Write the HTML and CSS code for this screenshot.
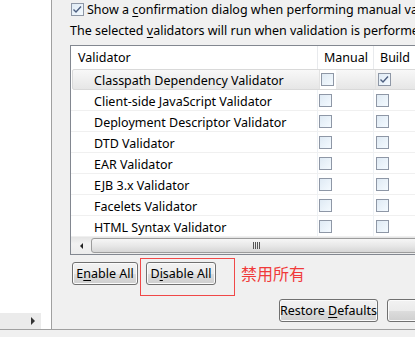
FILE: index.html
```html
<!DOCTYPE html>
<html lang="en">
<head>
    <meta charset="UTF-8">
    <title>Validation Preferences</title>
    <link rel="stylesheet" href="styles.css">
</head>
<body>
    <div class="window">
        <div class="main">
            <!-- Preference tree (mostly scrolled out of view) -->
            <aside class="nav">
                <div class="nav-scroll"><span class="arrow-right"></span></div>
            </aside>

            <section class="page">
                <label class="check-line">
                    <span class="cb">
                        <svg width="13" height="13" viewBox="0 0 13 13"><path d="M2.5 6.5 L5 9 L10 3.5" fill="none" stroke="#4d5f80" stroke-width="1.4"/></svg>
                    </span>
                    <span>Show a <u>c</u>onfirmation dialog when performing manual validation</span>
                </label>
                <p class="hint">The selected <u>v</u>alidators will run when validation is performed:</p>

                <div class="table">
                    <div class="thead">
                        <div class="th th-name">Validator</div>
                        <div class="th">Manual</div>
                        <div class="th">Build</div>
                        <div class="th"></div>
                    </div>

                    <div class="row hot">
                        <div class="td td-name">Classpath Dependency Validator</div>
                        <div class="td td-manual"><span class="cb"></span></div>
                        <div class="td td-build"><span class="cb"><svg width="13" height="13" viewBox="0 0 13 13"><path d="M2.5 6.5 L5 9 L10 3.5" fill="none" stroke="#4d5f80" stroke-width="1.4"/></svg></span></div>
                        <div class="td"></div>
                    </div>
                    <div class="row">
                        <div class="td td-name">Client-side JavaScript Validator</div>
                        <div class="td td-manual"><span class="cb"></span></div>
                        <div class="td td-build"><span class="cb"></span></div>
                        <div class="td"></div>
                    </div>
                    <div class="row">
                        <div class="td td-name">Deployment Descriptor Validator</div>
                        <div class="td td-manual"><span class="cb"></span></div>
                        <div class="td td-build"><span class="cb"></span></div>
                        <div class="td"></div>
                    </div>
                    <div class="row">
                        <div class="td td-name">DTD Validator</div>
                        <div class="td td-manual"><span class="cb"></span></div>
                        <div class="td td-build"><span class="cb"></span></div>
                        <div class="td"></div>
                    </div>
                    <div class="row">
                        <div class="td td-name">EAR Validator</div>
                        <div class="td td-manual"><span class="cb"></span></div>
                        <div class="td td-build"><span class="cb"></span></div>
                        <div class="td"></div>
                    </div>
                    <div class="row">
                        <div class="td td-name">EJB 3.x Validator</div>
                        <div class="td td-manual"><span class="cb"></span></div>
                        <div class="td td-build"><span class="cb"></span></div>
                        <div class="td"></div>
                    </div>
                    <div class="row">
                        <div class="td td-name">Facelets Validator</div>
                        <div class="td td-manual"><span class="cb"></span></div>
                        <div class="td td-build"><span class="cb"></span></div>
                        <div class="td"></div>
                    </div>
                    <div class="row">
                        <div class="td td-name">HTML Syntax Validator</div>
                        <div class="td td-manual"><span class="cb"></span></div>
                        <div class="td td-build"><span class="cb"></span></div>
                        <div class="td"></div>
                    </div>

                    <!-- Horizontal scrollbar -->
                    <div class="hscroll">
                        <span class="sb-btn"><span class="arrow-left"></span></span>
                        <span class="sb-thumb"><span class="grip"></span></span>
                    </div>
                </div>

                <div class="actions">
                    <button class="btn btn-enable">E<u>n</u>able All</button>
                    <button class="btn btn-disable">D<u>i</u>sable All</button>
                    <span class="note">禁用所有</span>
                    <span class="mark"></span>
                </div>

                <div class="footer-actions">
                    <button class="btn btn-restore">Restore <u>D</u>efaults</button>
                    <button class="btn btn-apply">Apply</button>
                </div>
            </section>
        </div>
    </div>
</body>
</html>
```

FILE: styles.css
```css
/* Base */
* {
    box-sizing: border-box;
}

body {
    margin: 0;
    width: 415px;
    height: 337px;
    overflow: hidden;
    background: #f0f0f0;
    color: #000;
    font-family: "Noto Sans", "Open Sans", sans-serif;
    font-size: 12.5px;
}

u {
    text-decoration-thickness: 1px;
    text-underline-offset: 2px;
}

.window {
    height: 337px;
}

.main {
    display: flex;
    height: 330px;
    border-bottom: 1px solid #a0a0a0;
}

/* Left tree pane */
.nav {
    flex: 0 0 52px;
    background: #fff;
    border-right: 1px solid #a0a0a0;
    display: flex;
    flex-direction: column;
    justify-content: flex-end;
}

.nav-scroll {
    width: 41px;
    height: 16px;
    background: #ebebeb;
    display: flex;
    align-items: center;
    justify-content: flex-end;
    padding-right: 6px;
}

.arrow-right {
    width: 0;
    height: 0;
    border-top: 4px solid transparent;
    border-bottom: 4px solid transparent;
    border-left: 4px solid #333;
}

/* Right page */
.page {
    flex: 1;
    min-width: 0;
    padding-left: 18px;
    overflow: hidden;
    white-space: nowrap;
}

.check-line {
    display: flex;
    align-items: center;
    gap: 3px;
    height: 18px;
    margin-left: 1px;
}

.hint {
    margin: 4px 0 0;
    line-height: 18px;
}

/* Checkbox */
.cb {
    display: inline-block;
    flex: 0 0 13px;
    width: 13px;
    height: 13px;
    border: 1px solid #8e97a6;
    background: linear-gradient(135deg, #dfeaf4 0%, #f4faff 100%);
    position: relative;
}

.cb svg {
    position: absolute;
    left: -1px;
    top: -1px;
}

/* Validator table */
.table {
    width: 420px;
    margin-top: 5px;
    border: 1px solid #828790;
    background: #fff;
}

.thead,
.row {
    display: grid;
    grid-template-columns: 247px 56px 56px 1fr;
}

.thead {
    height: 23px;
}

.th {
    line-height: 23px;
    padding-left: 6px;
    border-right: 1px solid #e8eaed;
}

.th-name {
    padding-left: 7px;
}

.row {
    height: 21px;
    border-bottom: 1px solid #f0f0f0;
}

.row.hot {
    margin-left: 1px;
    border: 1px solid #d9d9d9;
    border-radius: 2px;
    background: linear-gradient(#f8f8f8, #e6e6e6);
}

.td {
    display: flex;
    align-items: center;
    border-right: 1px solid #edf1f5;
}

.row.hot .td {
    border-right-color: #e2e2e2;
}

.td-name {
    padding-left: 23px;
    padding-top: 2px;
}

.row.hot .td-name {
    padding-left: 21px;
}

.td-manual {
    padding-left: 1px;
}

.row.hot .td-manual {
    background: linear-gradient(to right, #fff 16px, transparent 16px);
}

.td-build {
    padding-left: 2px;
}

/* Scrollbar */
.hscroll {
    display: flex;
    height: 17px;
    background: linear-gradient(#e4e4e4, #f2f2f2 40%, #ececec);
    padding: 1px 0;
}

.sb-btn {
    flex: 0 0 20px;
    display: flex;
    align-items: center;
    justify-content: center;
}

.arrow-left {
    width: 0;
    height: 0;
    border-top: 3px solid transparent;
    border-bottom: 3px solid transparent;
    border-right: 3px solid #222;
}

.sb-thumb {
    width: 330px;
    border: 1px solid #9c9c9c;
    border-radius: 3px;
    background: linear-gradient(#f6f6f6, #e8e8e8 50%, #d6d6d6);
    display: flex;
    align-items: center;
    justify-content: center;
}

.grip {
    width: 7px;
    height: 7px;
    background: repeating-linear-gradient(to right, #555 0, #555 1px, transparent 1px, transparent 2px);
}

/* Buttons */
.btn {
    height: 23px;
    padding: 0;
    border: 1px solid #707070;
    border-radius: 3px;
    background: linear-gradient(#f2f2f2 0%, #ebebeb 50%, #dddddd 51%, #cfcfcf 100%);
    box-shadow: inset 0 0 0 1px #fbfbfb;
    font: inherit;
    color: #000;
    white-space: nowrap;
}

.actions {
    position: relative;
    display: flex;
    align-items: center;
    gap: 8px;
    margin-top: 7px;
    padding-left: 2px;
}

.btn-enable {
    width: 66px;
}

.btn-disable {
    width: 70px;
}

.note {
    margin-left: 17px;
    color: #f03a3a;
    font-family: "Noto Sans CJK SC", sans-serif;
    font-size: 16px;
    line-height: 23px;
}

/* Red annotation frame drawn over the Disable All button */
.mark {
    position: absolute;
    left: 70px;
    top: -4px;
    width: 95px;
    height: 38px;
    border: 1px solid #f04848;
}

.footer-actions {
    display: flex;
    gap: 9px;
    margin-top: 14px;
    padding-left: 209px;
}

.btn-restore {
    width: 104px;
}

.btn-apply {
    flex: 0 0 80px;
    color: transparent;
}
```
